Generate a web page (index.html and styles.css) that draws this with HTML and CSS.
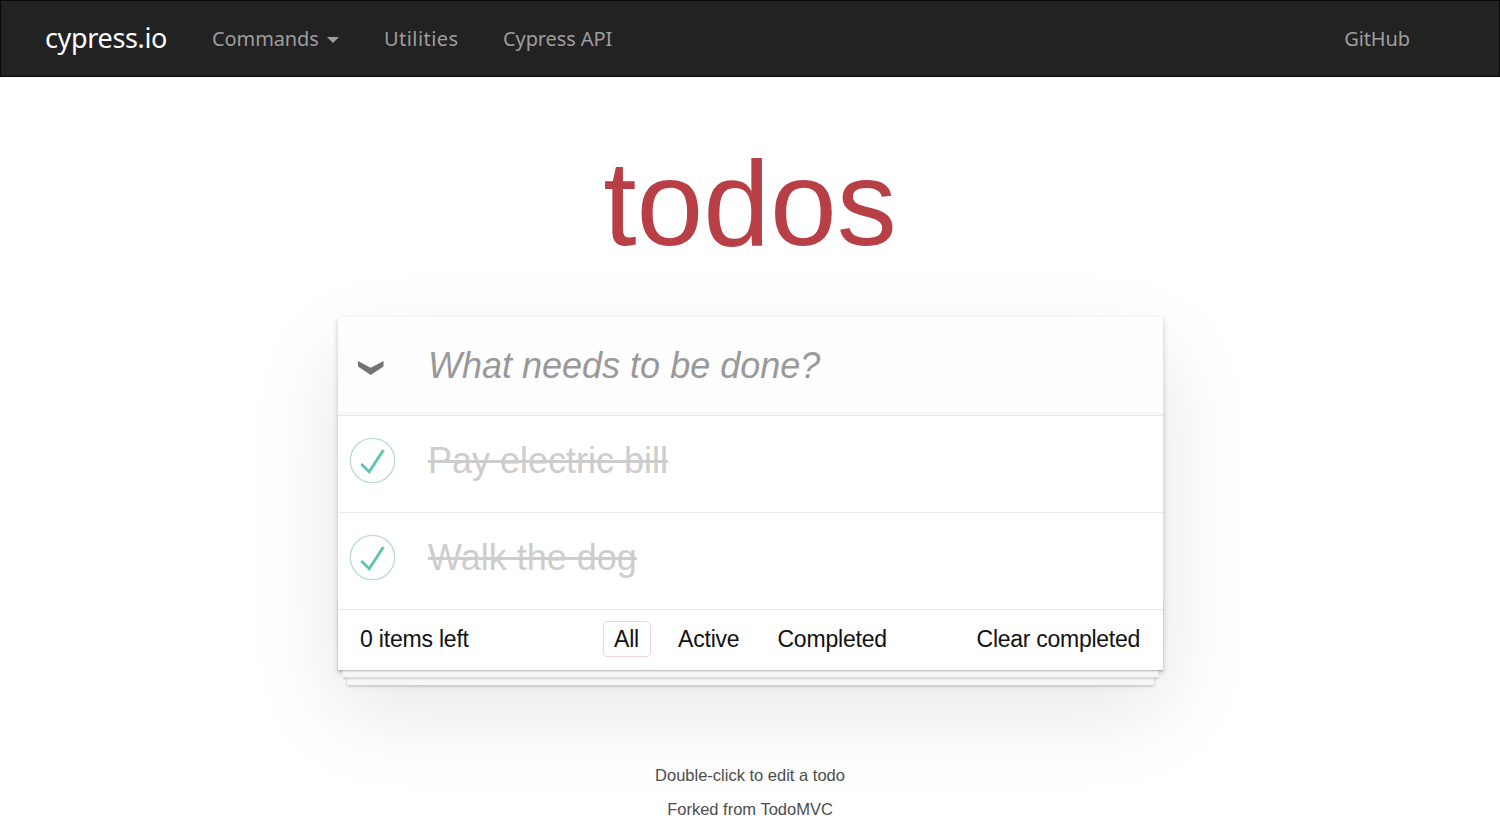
FILE: index.html
```html
<!DOCTYPE html>
<html lang="en">
<head>
<meta charset="utf-8">
<title>cypress.io: Todo</title>
<link rel="stylesheet" href="styles.css">
</head>
<body>
<nav class="navbar">
  <a class="brand">cypress.io</a>
  <a class="nav-link commands">Commands<span class="caret"></span></a>
  <a class="nav-link utilities">Utilities</a>
  <a class="nav-link api">Cypress API</a>
  <a class="nav-link github">GitHub</a>
</nav>
<main>
  <h1 class="title">todos</h1>
  <section class="card">
    <header class="entry">
      <svg class="chevron" viewBox="0 0 26 15"><path d="M0 0L12.7 6.8 25.5 0V5.5L12.7 14 0 5.5z"/></svg>
      <span class="placeholder">What needs to be done?</span>
    </header>
    <ul class="list">
      <li class="todo">
        <svg class="check" viewBox="-3 -3 106 106"><circle cx="50" cy="50" r="50"/><path d="M72 25L42 71 27 56l-4 4 20 20 34-52z"/></svg>
        <span class="label">Pay electric bill</span>
      </li>
      <li class="todo">
        <svg class="check" viewBox="-3 -3 106 106"><circle cx="50" cy="50" r="50"/><path d="M72 25L42 71 27 56l-4 4 20 20 34-52z"/></svg>
        <span class="label">Walk the dog</span>
      </li>
    </ul>
    <footer class="footer">
      <span class="count">0 items left</span>
      <div class="filters">
        <a class="filter selected">All</a>
        <a class="filter">Active</a>
        <a class="filter">Completed</a>
      </div>
      <span class="clear">Clear completed</span>
    </footer>
  </section>
  <div class="info">
    <p>Double-click to edit a todo</p>
    <p>Forked from TodoMVC</p>
  </div>
</main>
</body>
</html>
```
FILE: styles.css
```css
* { box-sizing: border-box; }
html, body { overflow: hidden; }
body {
  margin: 0;
  height: 831px;
  background: #fff;
  color: #111;
  font-family: "Liberation Sans", Arial, sans-serif;
}
.navbar {
  display: flex;
  align-items: center;
  height: 77px;
  padding: 0 89px 0 44px;
  background: #222;
  border: 1px solid #080808;
  font-family: "Noto Sans", sans-serif;
}
.brand { width: 167px; margin-top: -3px; color: #fff; font-size: 27px; letter-spacing: -0.35px; white-space: nowrap; }
.nav-link { color: #9d9d9d; font-size: 20px; white-space: nowrap; }
.commands { display: flex; align-items: center; width: 172px; letter-spacing: -0.1px; }
.utilities { width: 119px; letter-spacing: 0.45px; }
.api { letter-spacing: -0.1px; }
.github { margin-left: auto; letter-spacing: -0.1px; }
.caret {
  margin: 3px 0 0 8px;
  border: 6px solid transparent;
  border-top-color: #9d9d9d;
  border-bottom: 0;
}
.title {
  height: 240px;
  margin: 0;
  padding-top: 58px;
  color: #b83f45;
  font-size: 120px;
  font-weight: 400;
  line-height: 137px;
  text-align: center;
}
.card {
  width: 825px;
  margin: 0 0 0 338px;
  background: #fff;
  box-shadow: 0 3px 6px rgba(0,0,0,.2), 0 37.5px 88px rgba(0,0,0,.105);
}
.entry {
  display: flex;
  align-items: center;
  height: 98px;
  padding-left: 20px;
  background: #fefefe;
  box-shadow: inset 0 -3px 1.5px rgba(0,0,0,.03);
}
.chevron { width: 26px; height: 15px; margin-top: 5px; fill: #737373; }
.placeholder { margin-left: 44px; color: #999; font-size: 36px; font-style: italic; line-height: 50px; }
.list { margin: 0; padding: 0; list-style: none; border-top: 1px solid #e6e6e6; }
.todo { display: flex; height: 97px; padding: 21px 0 0 11px; border-bottom: 1px solid #ededed; }
.todo:last-child { border-bottom: 0; height: 96px; }
.check { width: 47px; height: 47px; overflow: visible; }
.check circle { fill: none; stroke: #bddad5; stroke-width: 3; }
.check path { fill: #5dc2af; stroke: #5dc2af; stroke-width: .8; }
.label { margin-left: 32px; color: #cdcdcd; font-size: 36px; line-height: 48px; text-decoration: line-through; }
.footer {
  display: flex;
  align-items: center;
  position: relative;
  height: 61px;
  padding: 0 23px 2px 22px;
  border-top: 1px solid #e6e6e6;
  font-size: 23px;
  letter-spacing: -0.2px;
}
.footer::before {
  content: "";
  position: absolute;
  inset: auto 0 0;
  height: 75px;
  pointer-events: none;
  box-shadow: 0 1.5px 1.5px rgba(0,0,0,.2), 0 12px 0 -4.5px #f6f6f6, 0 13.5px 1.5px -4.5px rgba(0,0,0,.2), 0 24px 0 -9px #f6f6f6, 0 25.5px 3px -9px rgba(0,0,0,.2);
}
.count { width: 243px; }
.filters { display: flex; gap: 16px; }
.filter { padding: 4px 10px; height: 36px; line-height: 26px; border: 1px solid transparent; border-radius: 4px; }
.selected { width: 48px; border-color: #efd5d6; }
.clear { margin-left: auto; letter-spacing: -0.27px; }
.info { margin-top: 97px; color: #4d4d4d; font-size: 16.5px; line-height: 17px; text-align: center; }
.info p { margin: 0 0 17px; }
```
